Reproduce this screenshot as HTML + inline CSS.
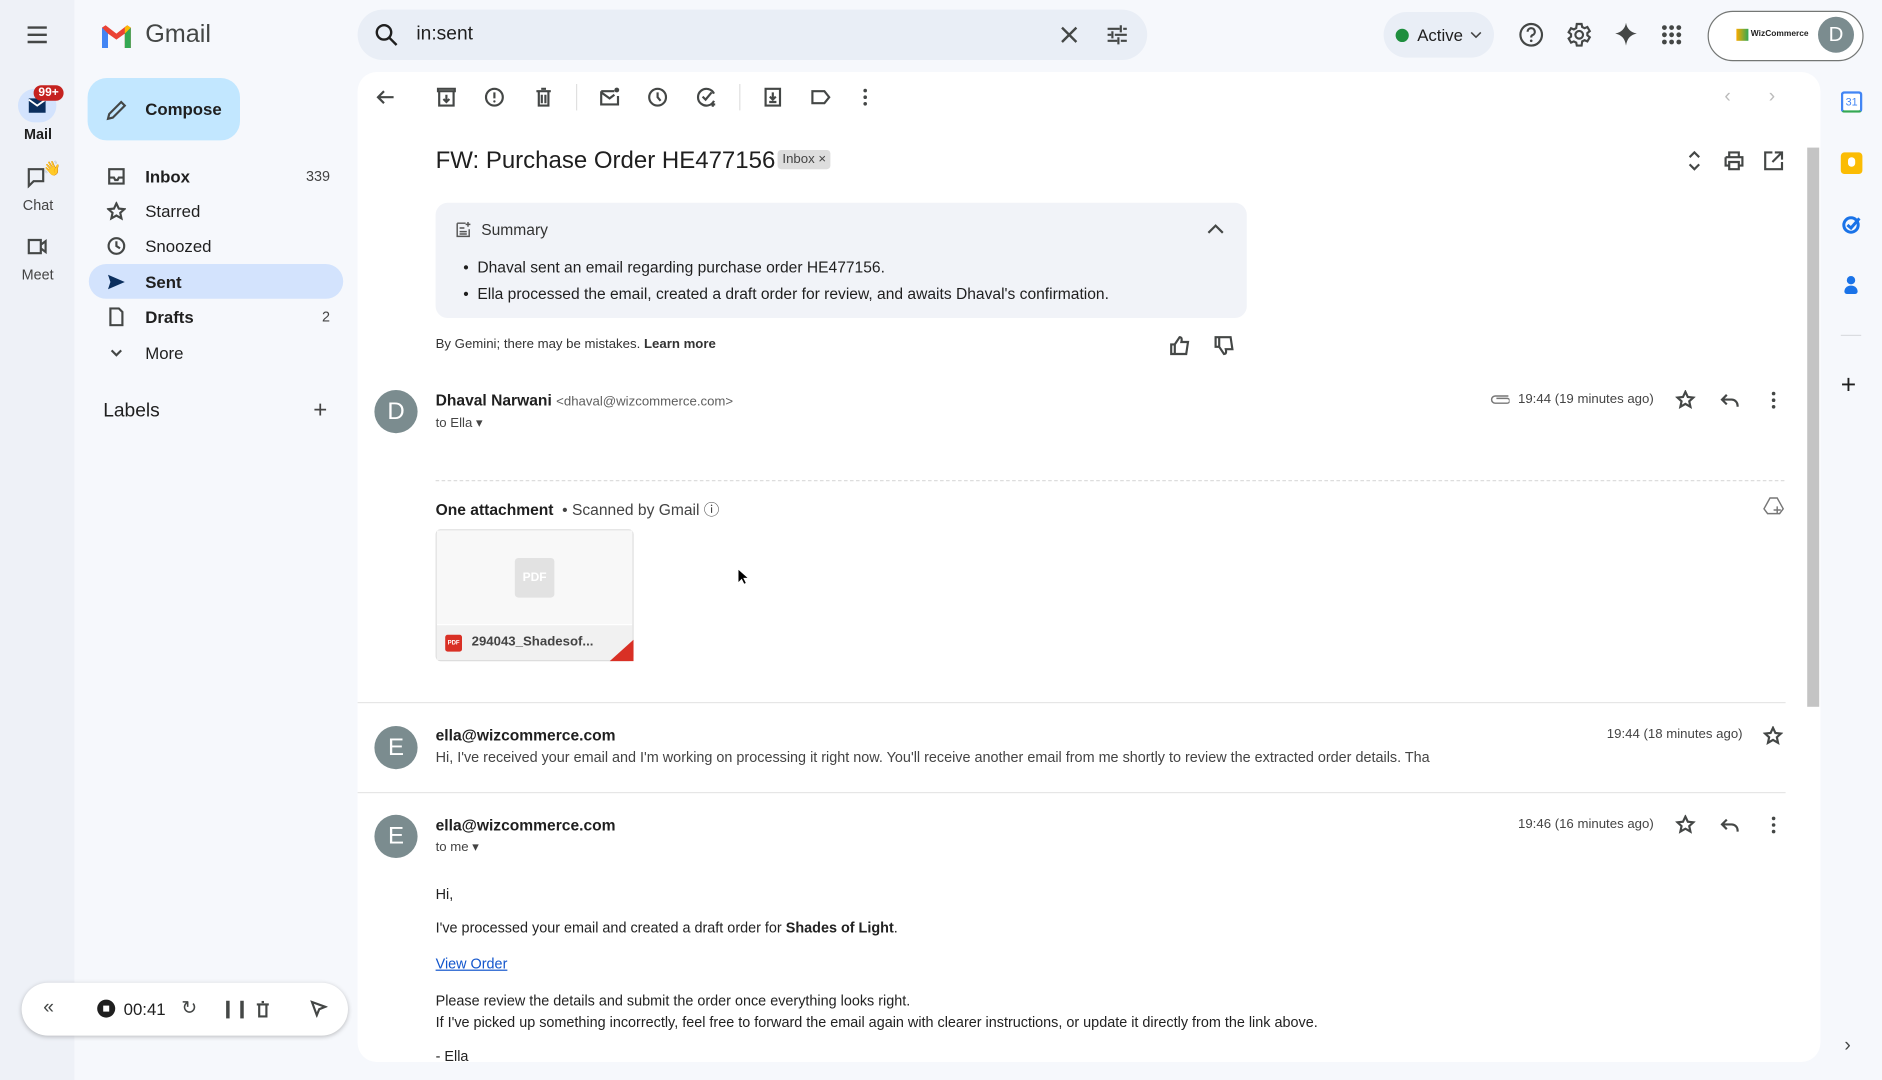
<!DOCTYPE html>
<html><head><meta charset="utf-8"><style>
*{box-sizing:border-box;margin:0;padding:0}
html,body{width:1882px;height:1080px;overflow:hidden;background:#f6f8fc;font-family:"Liberation Sans",Arial,sans-serif;color:#1f1f1f}
#w{position:absolute;left:0;top:0;width:1568px;height:900px;transform:scale(1.2);transform-origin:0 0;background:#f6f8fc}
.a{position:absolute}
svg{display:block}
.ic{stroke:#444746;fill:none;stroke-width:1.8}
.nav{position:absolute;left:74px;width:212px;height:29px;border-radius:15px;font-size:14px;display:flex;align-items:center}
.nav span.t{position:absolute;left:47px}
.nav span.n{position:absolute;right:11px;font-size:12px;color:#444}
.nav svg{position:absolute;left:15px}
.g{color:#444746}
.av{position:absolute;width:36px;height:36px;border-radius:50%;background:#7b8c8f;color:#fff;font-size:20px;text-align:center;line-height:36px}
</style></head><body><div id="w">
<div class="a" style="left:0;top:0;width:62px;height:900px;background:#eef1f7"></div>
<svg class="a" style="left:21px;top:20px" width="20" height="18"><path d="M2 3h16M2 9h16M2 15h16" stroke="#444746" stroke-width="2"/></svg>
<svg class="a" style="left:83px;top:19px" width="28" height="22" viewBox="0 0 28 22"><path d="M2 4v17h5V9l7 5 7-5v12h5V4l-3-2-9 7-9-7z" fill="#ea4335"/><path d="M2 4v17h5V9z" fill="#4285f4"/><path d="M21 9v12h5V4z" fill="#34a853"/><path d="M21 9l5-5-3-2-2 2z" fill="#fbbc04"/></svg>
<div class="a" style="left:121px;top:17px;font-size:21px;color:#444746">Gmail</div>
<div class="a" style="left:15px;top:74px;width:32px;height:28px;border-radius:14px;background:#d3e3fd"></div>
<svg class="a" style="left:23px;top:81px" width="16" height="14"><path d="M1 1h14v12H1z" fill="#0b2f5e"/><path d="M1 2l7 5 7-5" stroke="#fff" stroke-width="1.5" fill="none"/></svg>
<div class="a" style="left:28px;top:71px;background:#c5221f;color:#fff;font-size:10px;font-weight:bold;border-radius:8px;padding:1px 4px">99+</div>
<div class="a" style="left:20px;top:105px;font-size:12px;font-weight:bold">Mail</div>
<svg class="a" style="left:22px;top:139px" width="18" height="18"><path d="M2 2h12v10H6l-4 4z" class="ic" stroke-width="1.5"/></svg>
<div class="a" style="left:36px;top:133px;font-size:12px">👋</div>
<div class="a" style="left:19px;top:164px;font-size:12px;color:#444">Chat</div>
<svg class="a" style="left:22px;top:198px" width="18" height="16"><path d="M2 2h10v11H2zM12 6l4-3v9l-4-3" class="ic" stroke-width="1.5"/></svg>
<div class="a" style="left:18px;top:222px;font-size:12px;color:#444">Meet</div>
<div class="a" style="left:73px;top:65px;width:127px;height:52px;border-radius:16px;background:#c2e7ff"></div>
<svg class="a" style="left:87px;top:82px" width="20" height="20"><path d="M3 17l1-4L14 3l3 3L7 16z" class="ic" stroke="#1f1f1f" stroke-width="1.8"/></svg>
<div class="a" style="left:121px;top:83px;font-size:14px;font-weight:bold;color:#1f1f1f">Compose</div>
<div class="nav" style="top:132px"><svg width="16" height="16"><path d="M2 2h12v12H2zM2 9h4l1 2h2l1-2h4" class="ic" stroke-width="1.5"/></svg><span class="t" style="font-weight:bold">Inbox</span><span class="n">339</span></div>
<div class="nav" style="top:161px"><svg width="16" height="16"><path d="M8 1.5l2 4.3 4.6.5-3.4 3.1 1 4.6L8 11.6 3.8 14l1-4.6L1.4 6.3 6 5.8z" class="ic" stroke-width="1.3"/></svg><span class="t">Starred</span></div>
<div class="nav" style="top:190px"><svg width="16" height="16"><circle cx="8" cy="8" r="6.5" class="ic" stroke-width="1.5"/><path d="M8 4v4l3 2" class="ic" stroke-width="1.5"/></svg><span class="t">Snoozed</span></div>
<div class="nav" style="top:220px;background:#d3e3fd"><svg width="16" height="16"><path d="M1 2l14 6-14 6 2-6z" fill="#0b2f5e"/></svg><span class="t" style="font-weight:bold">Sent</span></div>
<div class="nav" style="top:249px"><svg width="16" height="16"><path d="M3 1h7l3 3v11H3z" class="ic" stroke-width="1.5"/></svg><span class="t" style="font-weight:bold">Drafts</span><span class="n">2</span></div>
<div class="nav" style="top:279px"><svg width="16" height="16"><path d="M4 6l4 4 4-4" class="ic" stroke-width="1.5"/></svg><span class="t">More</span></div>
<div class="a" style="left:86px;top:334px;font-size:16px;font-weight:500">Labels</div>
<div class="a" style="left:261px;top:331px;font-size:20px;color:#444">+</div>
<div class="a" style="left:18px;top:819px;width:272px;height:44px;border-radius:22px;background:#fff;box-shadow:0 1px 4px rgba(0,0,0,.25)"></div>
<div class="a g" style="left:36px;top:831px;font-size:16px">«</div>
<div class="a" style="left:81px;top:833px;width:15px;height:15px;border-radius:50%;background:#1f1f1f"></div>
<div class="a" style="left:86px;top:838px;width:5px;height:5px;background:#fff"></div>
<div class="a" style="left:103px;top:833px;font-size:14px">00:41</div>
<div class="a g" style="left:151px;top:830px;font-size:16px">↻</div>
<div class="a g" style="left:184px;top:832px;font-size:14px;font-weight:bold">❙❙</div>
<svg class="a" style="left:212px;top:834px" width="14" height="14"><path d="M2 3h10M4 3v10h6V3M6 1h2" class="ic" stroke-width="1.3"/></svg>
<svg class="a" style="left:258px;top:833px" width="15" height="15"><path d="M2 2l11 4-5 2-2 5z" class="ic" stroke-width="1.3"/></svg>
<div class="a" style="left:298px;top:8px;width:658px;height:42px;border-radius:21px;background:#e9eef6"></div>
<svg class="a" style="left:312px;top:19px" width="20" height="20"><circle cx="8" cy="8" r="6" stroke="#1f1f1f" stroke-width="2" fill="none"/><path d="M12.5 12.5l6 6" stroke="#1f1f1f" stroke-width="2"/></svg>
<div class="a" style="left:347px;top:20px;font-size:16px">in:sent</div>
<svg class="a" style="left:882px;top:20px" width="18" height="18"><path d="M3 3l12 12M15 3L3 15" stroke="#444746" stroke-width="2"/></svg>
<svg class="a" style="left:921px;top:19px" width="20" height="20"><path d="M2 5h10M15 5h3M2 10h3M8 10h10M2 15h8M13 15h5M13 2v6M6 7v6M11 12v6" stroke="#444746" stroke-width="1.8" fill="none"/></svg>
<div class="a" style="left:1153px;top:10px;width:92px;height:38px;border-radius:19px;background:#e9eef6"></div>
<div class="a" style="left:1163px;top:24px;width:11px;height:11px;border-radius:50%;background:#1e8e3e"></div>
<div class="a" style="left:1181px;top:21px;font-size:14px;font-weight:500">Active</div>
<svg class="a" style="left:1225px;top:25px" width="10" height="8"><path d="M1 2l4 4 4-4" stroke="#444" stroke-width="1.3" fill="none"/></svg>
<svg class="a" style="left:1265px;top:18px" width="22" height="22"><circle cx="11" cy="11" r="9" class="ic" stroke-width="1.8"/><path d="M8 8.5a3 3 0 1 1 4 2.8c-1 .4-1 1-1 2" class="ic" stroke-width="1.8"/><circle cx="11" cy="16" r="1.1" fill="#444746"/></svg>
<svg class="a" style="left:1305px;top:18px" width="22" height="22"><circle cx="11" cy="11" r="3.2" class="ic" stroke-width="1.8"/><path d="M9 2h4l.5 2.5 2 1 2.3-1 2 3.4-2 1.6v2l2 1.6-2 3.4-2.3-1-2 1L13 20H9l-.5-2.5-2-1-2.3 1-2-3.4 2-1.6v-2l-2-1.6 2-3.4 2.3 1 2-1z" class="ic" stroke-width="1.6"/></svg>
<svg class="a" style="left:1344px;top:18px" width="22" height="22"><path d="M11 1c.8 5 4 8.2 9 9-5 .8-8.2 4-9 10-.8-6-4-9.2-9-10 5-.8 8.2-4 9-9z" fill="#444746"/></svg>
<svg class="a" style="left:1384px;top:20px" width="18" height="18" fill="#444746"><circle cx="3" cy="3" r="2"/><circle cx="9" cy="3" r="2"/><circle cx="15" cy="3" r="2"/><circle cx="3" cy="9" r="2"/><circle cx="9" cy="9" r="2"/><circle cx="15" cy="9" r="2"/><circle cx="3" cy="15" r="2"/><circle cx="9" cy="15" r="2"/><circle cx="15" cy="15" r="2"/></svg>
<div class="a" style="left:1423px;top:9px;width:130px;height:42px;border-radius:21px;border:1px solid #747775;background:#fff"></div>
<div class="a" style="left:1447px;top:24px;width:10px;height:10px;background:linear-gradient(90deg,#f9ab00,#34a853)"></div>
<div class="a" style="left:1459px;top:25px;font-size:7px;font-weight:bold">WizCommerce</div>
<div class="av" style="left:1515px;top:14px;width:30px;height:30px;line-height:30px;font-size:17px">D</div>
<div class="a" style="left:1534px;top:76px;width:18px;height:18px;border-radius:3px;background:#fff;border:2px solid #4285f4;font-size:9px;color:#4285f4;text-align:center;line-height:14px;border-bottom-color:#34a853">31</div>
<div class="a" style="left:1534px;top:127px;width:18px;height:18px;border-radius:3px;background:#fbbc04"></div>
<div class="a" style="left:1540px;top:131px;width:6px;height:8px;border-radius:3px;background:#fff"></div>
<svg class="a" style="left:1534px;top:178px" width="18" height="18"><circle cx="8.5" cy="9.5" r="6" stroke="#1a73e8" stroke-width="2.5" fill="none"/><path d="M5.5 9.5l3 2.5 7-8" stroke="#1a73e8" stroke-width="2.5" fill="none"/></svg>
<div class="a" style="left:1539px;top:230px;width:7px;height:7px;border-radius:50%;background:#1a73e8"></div>
<div class="a" style="left:1537px;top:238px;width:11px;height:7px;border-radius:5px 5px 2px 2px;background:#1a73e8"></div>
<div class="a" style="left:1534px;top:279px;width:17px;height:1px;background:#dadce0"></div>
<div class="a" style="left:1534px;top:308px;font-size:22px;color:#1f1f1f">+</div>
<div class="a g" style="left:1537px;top:863px;font-size:16px">›</div>
<div class="a" style="left:298px;top:60px;width:1219px;height:825px;border-radius:16px;background:#fff"></div>
<div class="a" style="left:1506px;top:123px;width:10px;height:466px;background:#c4c4c4"></div>
<svg class="a" style="left:312px;top:72px" width="18" height="18"><path d="M16 9H3M8 4L3 9l5 5" class="ic" stroke-width="1.8"/></svg>
<svg class="a" style="left:363px;top:72px" width="18" height="18"><path d="M3 4h12v12H3zM2 2h14v2H2zM9 7v6M6.5 10.5L9 13l2.5-2.5" class="ic" stroke-width="1.5"/></svg>
<svg class="a" style="left:403px;top:72px" width="18" height="18"><circle cx="9" cy="9" r="7" class="ic" stroke-width="1.5"/><path d="M9 5v5" class="ic" stroke-width="1.8"/><circle cx="9" cy="12.5" r="1" fill="#444746"/></svg>
<svg class="a" style="left:444px;top:72px" width="18" height="18"><path d="M3 4h12M5 4v12h8V4M7 2h4M7.5 7v7M10.5 7v7" class="ic" stroke-width="1.5"/></svg>
<div class="a" style="left:480px;top:70px;width:1px;height:22px;background:#e0e0e0"></div>
<svg class="a" style="left:499px;top:72px" width="18" height="18"><path d="M2 4h11M2 4v11h14V8M2 5l7 5 4-3" class="ic" stroke-width="1.5"/><circle cx="15" cy="3" r="2" fill="#444746"/></svg>
<svg class="a" style="left:539px;top:72px" width="18" height="18"><circle cx="9" cy="9" r="7" class="ic" stroke-width="1.5"/><path d="M9 5v4l2.5 3" class="ic" stroke-width="1.5"/></svg>
<svg class="a" style="left:580px;top:72px" width="18" height="18"><path d="M15 6a7 7 0 1 0 0 6M5.5 8.5L8 11l5-6M14 13v4M12 15h4" class="ic" stroke-width="1.5"/></svg>
<div class="a" style="left:616px;top:70px;width:1px;height:22px;background:#e0e0e0"></div>
<svg class="a" style="left:635px;top:72px" width="18" height="18"><path d="M3 2h12v14H3zM9 5v6M6.5 8.5L9 11l2.5-2.5M6 13h6" class="ic" stroke-width="1.5"/></svg>
<svg class="a" style="left:675px;top:72px" width="18" height="18"><path d="M2 4h10l4 5-4 5H2z" class="ic" stroke-width="1.5"/></svg>
<svg class="a" style="left:712px;top:72px" width="18" height="18" fill="#444746"><circle cx="9" cy="3.5" r="1.5"/><circle cx="9" cy="9" r="1.5"/><circle cx="9" cy="14.5" r="1.5"/></svg>
<div class="a" style="left:1437px;top:72px;font-size:16px;color:#bbb">‹</div>
<div class="a" style="left:1474px;top:72px;font-size:16px;color:#bbb">›</div>
<div class="a" style="left:363px;top:123px;font-size:20px">FW: Purchase Order HE477156</div>
<div class="a" style="left:648px;top:125px;font-size:11px;background:#ddd;border-radius:3px;padding:2px 4px;color:#444">Inbox ×</div>
<svg class="a" style="left:1403px;top:125px" width="18" height="18"><path d="M5 6l4-4 4 4M5 12l4 4 4-4" class="ic" stroke-width="1.5"/></svg>
<svg class="a" style="left:1436px;top:125px" width="18" height="18"><path d="M5 6V2h8v4M2 6h14v7h-3M5 13H2V6M5 10h8v6H5z" class="ic" stroke-width="1.5"/></svg>
<svg class="a" style="left:1469px;top:125px" width="18" height="18"><path d="M8 2H2v14h14v-6M10 2h6v6M16 2L8 10" class="ic" stroke-width="1.5"/></svg>
<div class="a" style="left:363px;top:169px;width:676px;height:96px;border-radius:10px;background:#f1f3f8"></div>
<svg class="a" style="left:379px;top:184px" width="14" height="14"><path d="M2 2h7M2 2v11h10V7M4 6h4M4 9h6M4 11h6" stroke="#555" stroke-width="1.2" fill="none"/><path d="M11 1v4M9 3h4" stroke="#555" stroke-width="1.2"/></svg>
<div class="a" style="left:401px;top:184px;font-size:13px;color:#333">Summary</div>
<svg class="a" style="left:1006px;top:186px" width="14" height="10"><path d="M1 8l6-6 6 6" class="ic" stroke-width="1.6"/></svg>
<div class="a" style="left:386px;top:212px;font-size:13px;line-height:22px;color:#1f1f1f">•&nbsp;&nbsp;Dhaval sent an email regarding purchase order HE477156.<br>•&nbsp;&nbsp;Ella processed the email, created a draft order for review, and awaits Dhaval's confirmation.</div>
<div class="a" style="left:363px;top:281px;font-size:11px;color:#333">By Gemini; there may be mistakes. <b>Learn more</b></div>
<svg class="a" style="left:974px;top:279px" width="18" height="18"><path d="M2 8h3v8H2zM5 8l4-6c2 0 2 2 1.5 4H16l-1.5 10H5" class="ic" stroke-width="1.4"/></svg>
<svg class="a" style="left:1011px;top:279px" width="18" height="18"><path d="M2 2h3v8H2zM5 10l4 6c2 0 2-2 1.5-4H16L14.5 2H5" class="ic" stroke-width="1.4"/></svg>
<div class="av" style="left:312px;top:325px">D</div>
<div class="a" style="left:363px;top:326px;font-size:13px"><b>Dhaval Narwani</b> <span style="font-size:11px;color:#5e5e5e">&lt;dhaval@wizcommerce.com&gt;</span></div>
<div class="a" style="left:363px;top:346px;font-size:11px;color:#444">to Ella ▾</div>
<svg class="a" style="left:1242px;top:327px" width="16" height="12"><path d="M15 3H4a3 3 0 0 0 0 6h10a2 2 0 0 0 0-4H5" stroke="#777" stroke-width="1.2" fill="none"/></svg>
<div class="a" style="left:1265px;top:327px;font-size:11px;color:#444">19:44 (19 minutes ago)</div>
<svg class="a" style="left:1396px;top:325px" width="17" height="17"><path d="M8.5 1.5l2 4.3 4.6.5-3.4 3.1 1 4.6-4.2-2.4-4.2 2.4 1-4.6-3.4-3.1 4.6-.5z" class="ic" stroke-width="1.4"/></svg>
<svg class="a" style="left:1433px;top:325px" width="17" height="17"><path d="M6 4L2 8l4 4M2 8h8a5 5 0 0 1 5 5v1" class="ic" stroke-width="1.5"/></svg>
<svg class="a" style="left:1470px;top:325px" width="17" height="17" fill="#444746"><circle cx="8" cy="3" r="1.5"/><circle cx="8" cy="8.5" r="1.5"/><circle cx="8" cy="14" r="1.5"/></svg>
<div class="a" style="left:363px;top:400px;width:1124px;border-top:1px dashed #ddd"></div>
<div class="a" style="left:363px;top:414px;font-size:13px"><b>One attachment</b> <span style="color:#444">&nbsp;• Scanned by Gmail ⓘ</span></div>
<svg class="a" style="left:1469px;top:413px" width="18" height="16"><path d="M6 2h6l5 9-3 4H4l-3-4zM12 9v6M9 12h6" stroke="#777" stroke-width="1.2" fill="none"/></svg>
<div class="a" style="left:363px;top:441px;width:165px;height:110px;border:1px solid #ddd;border-radius:4px;background:#fff"></div>
<div class="a" style="left:364px;top:442px;width:163px;height:78px;background:#f8f8f8"></div>
<div class="a" style="left:429px;top:465px;width:33px;height:33px;background:#e2e2e2;border-radius:3px;color:#fff;font-size:10px;font-weight:bold;text-align:center;line-height:33px">PDF</div>
<div class="a" style="left:364px;top:521px;width:163px;height:29px;background:#f1f1f1"></div>
<div class="a" style="left:371px;top:529px;width:14px;height:14px;background:#d93025;border-radius:2px;color:#fff;font-size:5px;font-weight:bold;text-align:center;line-height:14px">PDF</div>
<div class="a" style="left:393px;top:529px;font-size:11px;font-weight:bold;color:#444">294043_Shadesof...</div>
<svg class="a" style="left:508px;top:533px" width="20" height="18"><path d="M20 0v18H0z" fill="#d93025"/></svg>
<svg class="a" style="left:614px;top:473px" width="10" height="16"><path d="M1 1v12l3-3 2 4 2-1-2-4h4z" fill="#000" stroke="#fff" stroke-width=".8"/></svg>
<div class="a" style="left:298px;top:585px;width:1190px;height:1px;background:#e6e6e6"></div>
<div class="av" style="left:312px;top:605px">E</div>
<div class="a" style="left:363px;top:605px;font-size:13px;font-weight:bold">ella@wizcommerce.com</div>
<div class="a" style="left:363px;top:624px;font-size:12px;color:#444">Hi, I've received your email and I'm working on processing it right now. You'll receive another email from me shortly to review the extracted order details. Tha</div>
<div class="a" style="left:1339px;top:606px;font-size:11px;color:#444">19:44 (18 minutes ago)</div>
<svg class="a" style="left:1469px;top:605px" width="17" height="17"><path d="M8.5 1.5l2 4.3 4.6.5-3.4 3.1 1 4.6-4.2-2.4-4.2 2.4 1-4.6-3.4-3.1 4.6-.5z" class="ic" stroke-width="1.4"/></svg>
<div class="a" style="left:298px;top:660px;width:1190px;height:1px;background:#e6e6e6"></div>
<div class="av" style="left:312px;top:679px">E</div>
<div class="a" style="left:363px;top:680px;font-size:13px;font-weight:bold">ella@wizcommerce.com</div>
<div class="a" style="left:363px;top:699px;font-size:11px;color:#444">to me ▾</div>
<div class="a" style="left:1265px;top:681px;font-size:11px;color:#444">19:46 (16 minutes ago)</div>
<svg class="a" style="left:1396px;top:679px" width="17" height="17"><path d="M8.5 1.5l2 4.3 4.6.5-3.4 3.1 1 4.6-4.2-2.4-4.2 2.4 1-4.6-3.4-3.1 4.6-.5z" class="ic" stroke-width="1.4"/></svg>
<svg class="a" style="left:1433px;top:679px" width="17" height="17"><path d="M6 4L2 8l4 4M2 8h8a5 5 0 0 1 5 5v1" class="ic" stroke-width="1.5"/></svg>
<svg class="a" style="left:1470px;top:679px" width="17" height="17" fill="#444746"><circle cx="8" cy="3" r="1.5"/><circle cx="8" cy="8.5" r="1.5"/><circle cx="8" cy="14" r="1.5"/></svg>
<div class="a" style="left:363px;top:736px;font-size:12px;line-height:18px;color:#222">Hi,</div>
<div class="a" style="left:363px;top:766px;font-size:12px;color:#222">I've processed your email and created a draft order for <b>Shades of Light</b>.</div>
<div class="a" style="left:363px;top:796px;font-size:12px;color:#1155cc;text-decoration:underline">View Order</div>
<div class="a" style="left:363px;top:825px;font-size:12px;line-height:18px;color:#222">Please review the details and submit the order once everything looks right.<br>If I've picked up something incorrectly, feel free to forward the email again with clearer instructions, or update it directly from the link above.</div>
<div class="a" style="left:363px;top:873px;font-size:12px;color:#222">- Ella</div>
</div></body></html>
